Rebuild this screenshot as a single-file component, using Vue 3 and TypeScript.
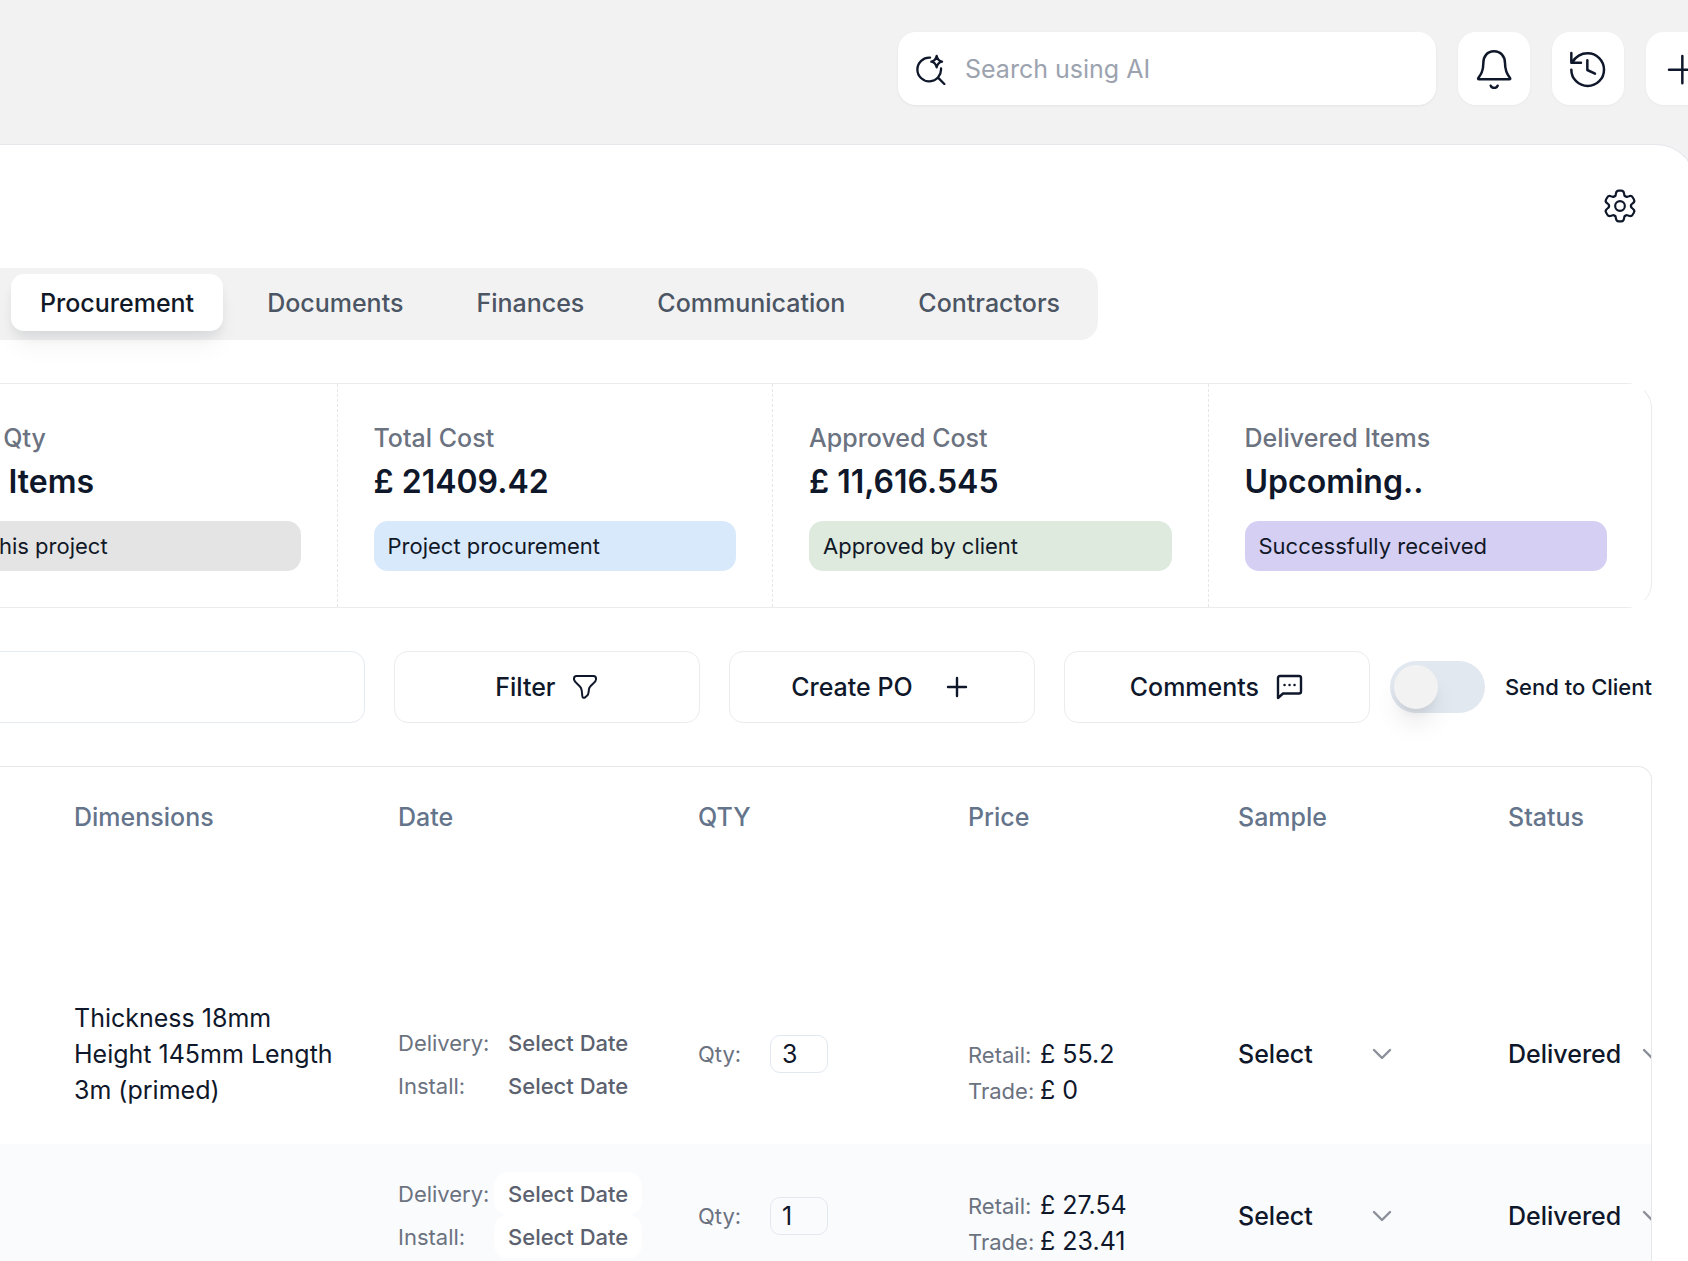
<script setup lang="ts">
import { ref } from 'vue'

interface Stat {
  label: string
  value: string
  note: string
  tone: string
}

interface Item {
  id: number
  dimensions: string
  qty: number
  retail: string
  trade: string
  sample: string
  status: string
  compact: boolean
}

const tabs = ['Procurement', 'Documents', 'Finances', 'Communication', 'Contractors']
const activeTab = ref('Procurement')
const sendToClient = ref(false)

const stats: Stat[] = [
  { label: 'Total Qty', value: '204 Items', note: 'For this project', tone: 'grey' },
  { label: 'Total Cost', value: '£ 21409.42', note: 'Project procurement', tone: 'blue' },
  { label: 'Approved Cost', value: '£ 11,616.545', note: 'Approved by client', tone: 'green' },
  { label: 'Delivered Items', value: 'Upcoming..', note: 'Successfully received', tone: 'purple' },
]

const columns = ['Dimensions', 'Date', 'QTY', 'Price', 'Sample', 'Status']

const items = ref<Item[]>([
  { id: 1, dimensions: 'Thickness 18mm Height 145mm Length 3m (primed)', qty: 3, retail: '£ 55.2', trade: '£ 0', sample: 'Select', status: 'Delivered', compact: false },
  { id: 2, dimensions: '', qty: 1, retail: '£ 27.54', trade: '£ 23.41', sample: 'Select', status: 'Delivered', compact: true },
])

const sampleOptions = ['Select', 'Ordered', 'Received']
const statusOptions = ['Delivered', 'Pending', 'Ordered']

// One tooth of the settings gear, repeated every 60 degrees around the centre.
function gearPath(): string {
  const turn = (x: number, y: number, k: number): string => {
    const a = (k * Math.PI) / 3
    const px = x * Math.cos(a) - y * Math.sin(a)
    const py = x * Math.sin(a) + y * Math.cos(a)
    return `${px.toFixed(2)} ${py.toFixed(2)}`
  }
  let d = `M${turn(-17, -29.4, 0)}`
  for (let k = 0; k < 6; k++) {
    const p = (x: number, y: number) => turn(x, y, k)
    d += `C${p(-13, -27)} ${p(-13, -34)} ${p(-12, -38)}`
    d += `Q${p(-11, -46)} ${p(-4, -46)}L${p(4, -46)}Q${p(11, -46)} ${p(12, -38)}`
    d += `C${p(13, -34)} ${p(13, -27)} ${p(17, -29.4)}`
  }
  return d + 'Z'
}
const gear = gearPath()
</script>

<template>
  <div class="app">
    <header class="topbar">
      <label class="search">
        <svg class="search-icon" viewBox="105 96 96 96" aria-hidden="true">
          <path d="M150 110A35.500 35.500 0 1 0 183 142M174 170L193 189" />
          <path d="M170 105Q173 119 186 122Q173 125 170 139Q167 125 154 122Q167 119 170 105Z" />
        </svg>
        <input type="search" placeholder="Search using AI" aria-label="Search using AI" />
      </label>
      <button class="square" type="button" aria-label="Notifications">
        <svg viewBox="163 84 120 120">
          <path d="M223 91C203 91 191 106 191 126C191 150 184 160 176 171Q174 175 178 175H269Q273 175 271 171C262 160 256 150 256 126C256 106 243 91 223 91ZM213 194C216 203 231 203 234 194" />
        </svg>
      </button>
      <button class="square" type="button" aria-label="History">
        <svg viewBox="444 84 120 120">
          <path d="M454 146A49 49 0 1 0 503 97C483 97 467 107 456 125M454 96V125H483M502 118V147L525 158" />
        </svg>
      </button>
      <button class="square" type="button" aria-label="Add">
        <svg viewBox="723 84 120 120"><path d="M744 146H824M784 105V187" /></svg>
      </button>
    </header>

    <main class="panel">
      <div class="settings-row">
        <button class="settings" type="button" aria-label="Settings">
          <svg viewBox="-54 -54 108 108"><path :d="gear" /><circle r="14.500" /></svg>
        </button>
      </div>

      <nav class="tabs" aria-label="Project sections">
        <button
          v-for="tab in tabs"
          :key="tab"
          type="button"
          class="tab"
          :class="{ active: tab === activeTab }"
          @click="activeTab = tab"
        >{{ tab }}</button>
      </nav>

      <section class="stats">
        <div class="stats-grid">
          <div v-for="stat in stats" :key="stat.label" class="stat">
            <div class="stat-label">{{ stat.label }}</div>
            <div class="stat-value">{{ stat.value }}</div>
            <div class="stat-note" :class="stat.tone">{{ stat.note }}</div>
          </div>
        </div>
      </section>

      <div class="toolbar">
        <input class="table-search" type="text" aria-label="Search items" />
        <button class="action" type="button">
          Filter
          <svg class="filter-icon" viewBox="0 0 28 28">
            <path d="M5.500 3H22.500Q25 3 25 5.500V6.500C25 9.500 20.500 11 18.500 14.500C17.500 16.500 18 19 17 21.500C16.500 22.500 15 23.500 14 24.500Q11.500 25.500 11.300 23C11 20 11 17 10 15C8 11.500 3.500 9.500 3 6.500V5.500Q3 3 5.500 3Z" />
          </svg>
        </button>
        <button class="action wide" type="button">
          Create PO
          <svg class="plus-icon" viewBox="0 0 32 32"><path d="M7 16H25M16 7V25" /></svg>
        </button>
        <button class="action" type="button">
          Comments
          <svg class="comment-icon" viewBox="0 0 30 30">
            <path d="M4 26V6Q4 4 6 4H25Q27 4 27 6V19.500Q27 21.500 25 21.500H9Z" />
            <path d="M10.500 13H10.600M15.500 13H15.600M20.500 13H20.600" />
          </svg>
        </button>
        <label class="send">
          <input v-model="sendToClient" class="switch" type="checkbox" role="switch" />
          Send to Client
        </label>
      </div>

      <section class="table-card">
        <table>
          <colgroup>
            <col class="c-dim" /><col class="c-date" /><col /><col /><col /><col />
          </colgroup>
          <thead>
            <tr><th v-for="c in columns" :key="c" scope="col">{{ c }}</th></tr>
          </thead>
          <tbody>
            <tr class="group"><td colspan="6"></td></tr>
            <tr v-for="item in items" :key="item.id" class="item" :class="{ compact: item.compact }">
              <td><div class="dimensions">{{ item.dimensions }}</div></td>
              <td class="low dates">
                <div class="date-line"><span>Delivery:</span><button type="button">Select Date</button></div>
                <div class="date-line"><span>Install:</span><button type="button">Select Date</button></div>
              </td>
              <td>
                <label class="qty"><span>Qty:</span><input v-model="item.qty" type="text" inputmode="numeric" /></label>
              </td>
              <td class="low">
                <div class="price-line"><span>Retail:</span>{{ item.retail }}</div>
                <div class="price-line"><span>Trade:</span>{{ item.trade }}</div>
              </td>
              <td>
                <div class="picker">
                  <select v-model="item.sample" aria-label="Sample">
                    <option v-for="o in sampleOptions" :key="o">{{ o }}</option>
                  </select>
                  <svg viewBox="0 0 20 12"><path d="M2 2L10 10L18 2" /></svg>
                </div>
              </td>
              <td>
                <div class="picker">
                  <select v-model="item.status" aria-label="Status">
                    <option v-for="o in statusOptions" :key="o">{{ o }}</option>
                  </select>
                  <svg viewBox="0 0 20 12"><path d="M2 2L10 10L18 2" /></svg>
                </div>
              </td>
            </tr>
          </tbody>
        </table>
      </section>
    </main>
  </div>
</template>

<style>
body {
  margin: 0;
  background: #f2f2f2;
}
</style>

<style scoped>
.app {
  display: flex;
  flex-direction: column;
  height: 100vh;
  overflow: hidden;
  background: #f2f2f2;
  color: #0f172a;
  font-family: Inter, "Liberation Sans", sans-serif;
  font-size: 25px;
  line-height: 36px;
}
.app * {
  box-sizing: border-box;
}
button,
input,
select {
  margin: 0;
  padding: 0;
  border: 0;
  background: none;
  color: inherit;
  font: inherit;
  outline: none;
}
svg {
  display: block;
  flex: none;
  fill: none;
  stroke: #0f172a;
  stroke-linecap: round;
  stroke-linejoin: round;
}
.topbar {
  display: flex;
  flex: none;
  justify-content: flex-end;
  gap: 22px;
  height: 144px;
  margin-right: -30px;
  padding-top: 32px;
}
.search {
  display: flex;
  align-items: center;
  gap: 18px;
  width: 538px;
  height: 73px;
  padding: 0 17px;
  border-radius: 18px;
  background: #fff;
  box-shadow: 0 1px 3px rgba(15, 23, 42, 0.06);
}
.search-icon {
  width: 32px;
  height: 32px;
  stroke-width: 7;
}
.search input {
  flex: 1;
  min-width: 0;
}
.search input::placeholder {
  color: #9ca3af;
  opacity: 1;
}
.square {
  display: grid;
  flex: none;
  place-items: center;
  width: 72px;
  height: 73px;
  border-radius: 18px;
  background: #fff;
  box-shadow: 0 1px 3px rgba(15, 23, 42, 0.04);
}
.square svg {
  width: 40px;
  height: 40px;
  stroke-width: 7.5;
}
.panel {
  flex: 1;
  margin-right: -8px;
  padding-right: 43px;
  border-top: 1px solid #e5e7eb;
  border-right: 1px solid #e5e7eb;
  border-top-right-radius: 40px;
  background: #fff;
}
.settings-row {
  display: flex;
  justify-content: flex-end;
  height: 123px;
  padding: 43px 14px 0 0;
}
.settings {
  width: 36px;
  height: 36px;
}
.settings svg {
  width: 36px;
  height: 36px;
  stroke-width: 6.5;
}
.tabs {
  display: flex;
  align-items: flex-start;
  gap: 15px;
  width: max-content;
  height: 72px;
  padding: 6px 9px 0 11px;
  border-radius: 0 18px 18px 0;
  background: #f2f2f2;
}
.tab {
  height: 57px;
  padding: 0 29px;
  border-radius: 13px;
  color: #4b5563;
  font-weight: 500;
}
.tab.active {
  background: #fff;
  color: #111827;
  box-shadow: 0 7px 11px -2px rgba(15, 23, 42, 0.08), 0 18px 27px -5px rgba(15, 23, 42, 0.05);
}
.stats {
  margin: 43px 0 0 -99px;
  padding-right: 7px;
  border: 1px solid #ececee;
  border-radius: 25px;
}
.stats-grid {
  display: grid;
  grid-template-columns: repeat(4, 1fr);
  background: #fff;
}
.stat {
  padding: 36px;
  border-right: 1px dashed #e5e7eb;
}
.stat:last-child {
  border-right-color: transparent;
}
.stat-label {
  color: #6b7280;
  font-weight: 500;
}
.stat-value {
  margin-top: 4px;
  font-size: 32px;
  font-weight: 600;
  line-height: 43px;
}
.stat-note {
  height: 50px;
  margin-top: 18px;
  padding: 0 14px;
  border-radius: 14px;
  color: #111827;
  font-size: 22px;
  line-height: 50px;
}
.grey { background: #e4e4e4; }
.blue { background: #d9e9fc; }
.green { background: #deeade; }
.purple { background: #d6cff4; }
.toolbar {
  display: flex;
  align-items: center;
  gap: 29px;
  margin: 43px 0 0 -99px;
}
.table-search {
  flex: 1;
  min-width: 0;
  height: 72px;
  padding: 0 29px;
  border: 1px solid #e5e9f0;
  border-radius: 14px;
}
.action {
  display: flex;
  flex: none;
  align-items: center;
  justify-content: center;
  gap: 15px;
  width: 306px;
  height: 72px;
  border: 1px solid #ececee;
  border-radius: 14px;
  font-weight: 500;
}
.action.wide {
  gap: 28px;
}
.action svg {
  stroke-width: 2.4;
}
.action .filter-icon {
  width: 28px;
  height: 28px;
  stroke-width: 2;
}
.plus-icon {
  width: 32px;
  height: 32px;
}
.comment-icon {
  width: 30px;
  height: 30px;
}
.send {
  display: flex;
  flex: none;
  align-items: center;
  gap: 20px;
  margin-left: -9px;
  font-size: 22px;
  font-weight: 500;
}
.switch {
  display: flex;
  align-items: center;
  width: 95px;
  height: 52px;
  padding: 0 4px;
  border-radius: 26px;
  background: #e2e8f0;
  appearance: none;
}
.switch::before {
  width: 44px;
  height: 44px;
  border-radius: 50%;
  background: #f2f2f2;
  box-shadow: 0 18px 27px -5px rgba(0, 0, 0, 0.1), 0 7px 11px -4px rgba(0, 0, 0, 0.08);
  content: "";
}
.switch:checked {
  justify-content: flex-end;
  background: #0f172a;
}
.table-card {
  margin-top: 43px;
  overflow: hidden;
  border: 1px solid #e8e8ea;
  border-width: 1px 1px 0 0;
  border-radius: 0 14px 0 0;
}
table {
  width: 1778px;
  border-collapse: collapse;
  table-layout: fixed;
}
.c-dim {
  width: 398px;
}
.c-date {
  width: 300px;
}
th,
td {
  padding: 0;
  text-align: left;
  vertical-align: middle;
}
th {
  height: 99px;
  color: #64748b;
  font-weight: 500;
}
th:first-child,
.item td:first-child {
  padding-left: 74px;
}
.group td {
  height: 98px;
}
.item td {
  height: 180px;
}
.item.compact {
  background: #fafbfd;
}
.item.compact td {
  height: 144px;
}
.item .low {
  padding-bottom: 36px;
  vertical-align: bottom;
}
.item .dates {
  padding-bottom: 37px;
}
.item.compact .low {
  padding-bottom: 29px;
}
.item.compact .dates {
  padding-bottom: 30px;
}
.dimensions {
  width: 276px;
}
.date-line {
  display: flex;
  align-items: center;
  height: 43px;
  color: #6b7280;
  font-size: 22px;
}
.date-line span {
  width: 96px;
}
.date-line button {
  height: 43px;
  padding: 0 14px;
  border-radius: 14px;
  background: #fff;
  color: #5b616e;
  font-weight: 500;
}
.qty {
  display: flex;
  align-items: center;
}
.qty span {
  width: 72px;
  color: #6b7280;
  font-size: 22px;
}
.qty input {
  width: 58px;
  height: 38px;
  padding: 0 11px;
  border: 1px solid #e2e8f0;
  border-radius: 10px;
}
.price-line {
  display: flex;
  align-items: baseline;
  height: 36px;
}
.price-line span {
  width: 72px;
  color: #6b7280;
  font-size: 22px;
}
.picker {
  display: flex;
  align-items: center;
  width: 154px;
}
.picker select {
  flex: 1;
  min-width: 0;
  margin-right: -20px;
  padding-right: 20px;
  font-weight: 500;
  appearance: none;
}
.picker svg {
  width: 20px;
  height: 12px;
  stroke: #8a8f9a;
  stroke-width: 2.4;
  pointer-events: none;
}
</style>
